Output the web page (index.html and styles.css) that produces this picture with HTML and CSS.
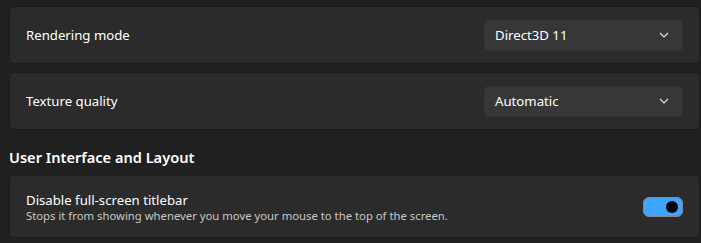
FILE: index.html
```html
<!DOCTYPE html>
<html lang="en">

<head>
    <meta charset="UTF-8">
    <meta name="viewport" content="width=device-width, initial-scale=1.0">
    <title>Settings</title>
    <link rel="stylesheet" href="styles.css">
</head>

<body>
    <main class="settings">
        <div class="card">
            <div class="label">Rendering mode</div>
            <div class="select">
                <span>Direct3D 11</span>
                <svg class="chev" width="10" height="6" viewBox="0 0 10 6"><path d="M1 1 L5 5 L9 1" fill="none" stroke="#e0e0e0" stroke-width="1.2"/></svg>
            </div>
        </div>

        <div class="card">
            <div class="label">Texture quality</div>
            <div class="select">
                <span>Automatic</span>
                <svg class="chev" width="10" height="6" viewBox="0 0 10 6"><path d="M1 1 L5 5 L9 1" fill="none" stroke="#e0e0e0" stroke-width="1.2"/></svg>
            </div>
        </div>

        <h2 class="section">User Interface and Layout</h2>

        <div class="card tall">
            <div class="text">
                <div class="label">Disable full-screen titlebar</div>
                <div class="desc">Stops it from showing whenever you move your mouse to the top of the screen.</div>
            </div>
            <div class="toggle on"><div class="knob"></div></div>
        </div>
    </main>
</body>

</html>
```

FILE: styles.css
```css
* {
    margin: 0;
    padding: 0;
    box-sizing: border-box;
    font-family: "Noto Sans", "Open Sans", sans-serif;
}

body {
    background-color: #202020;
    color: #ffffff;
    height: 243px;
    overflow: hidden;
}

.settings {
    padding: 6px 1px 0 9px;
    display: flex;
    flex-direction: column;
}

.card {
    height: 58px;
    margin-bottom: 8px;
    background-color: #2b2b2b;
    border: 1px solid #1c1c1c;
    border-radius: 4px;
    display: flex;
    align-items: center;
    justify-content: space-between;
    padding: 0 16px 0 16px;
}

.card.tall {
    height: 63px;
    margin-bottom: 0;
}

.label {
    font-size: 13.2px;
    color: #ffffff;
}

.desc {
    font-size: 11.3px;
    color: #c8c8c8;
    margin-top: -1px;
}

.text {
    display: flex;
    flex-direction: column;
    padding-top: 1px;
}

.select {
    width: 199px;
    height: 31px;
    background-color: #373737;
    border: 1px solid #333333;
    border-radius: 4px;
    display: flex;
    align-items: center;
    justify-content: space-between;
    padding: 0 13px 0 10px;
    font-size: 13.2px;
    color: #ffffff;
}

.section {
    font-size: 14.6px;
    font-weight: 600;
    margin: 9px 0 8px 0;
    line-height: 20px;
}

.toggle {
    width: 40px;
    height: 20px;
    border-radius: 6px;
    border: 1px solid #8a8a8a;
    background-color: #3da5ff;
    display: flex;
    align-items: center;
    justify-content: flex-end;
    padding-right: 4px;
}

.knob {
    width: 12px;
    height: 12px;
    border-radius: 50%;
    background-color: #000000;
}
```
